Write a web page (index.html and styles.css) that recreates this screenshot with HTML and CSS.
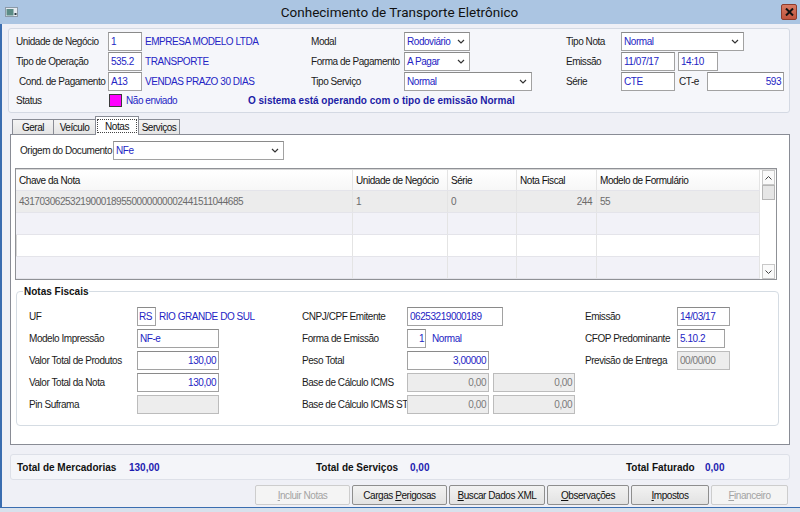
FILE: index.html
```html
<!DOCTYPE html>
<html lang="pt-BR">
<head>
  <meta charset="UTF-8">
  <title>Conhecimento de Transporte Eletrônico</title>
  <link rel="stylesheet" href="styles.css">
</head>
<body>
  <div class="window">
    <!-- Barra de título -->
    <div class="titlebar">
      <svg class="app-icon" width="13" height="10" viewBox="0 0 13 10">
        <rect x="0.5" y="0.5" width="12" height="9" fill="#e4eaf0" stroke="#8c9aa8"/>
        <rect x="1.5" y="2" width="7" height="6.5" fill="#5b8b86"/>
        <rect x="9.5" y="6" width="2" height="2" fill="#2d3b44"/>
      </svg>
      <span class="title">Conhecimento de Transporte Eletrônico</span>
      <span class="close-btn">
        <svg width="9" height="8" viewBox="0 0 9 8"><path d="M1 0.5l7 7M8 0.5l-7 7" stroke="#111" stroke-width="2"/></svg>
      </span>
    </div>

    <div class="client">
      <!-- Cabeçalho do conhecimento -->
      <div class="header-panel">
        <div class="hgrid">
          <span class="lbl">Unidade de Negócio</span>
          <div class="cell"><span class="field code">1</span><span class="desc">EMPRESA MODELO LTDA</span></div>
          <span class="lbl">Modal</span>
          <div class="cell"><div class="combo modal"><span>Rodoviário</span><svg class="chev" width="8" height="5" viewBox="0 0 8 5"><path d="M1 1l3 3 3-3" fill="none" stroke="#333" stroke-width="1.2"/></svg></div></div>
          <span class="lbl">Tipo Nota</span>
          <div class="cell"><div class="combo tipo-nota"><span>Normal</span><svg class="chev" width="8" height="5" viewBox="0 0 8 5"><path d="M1 1l3 3 3-3" fill="none" stroke="#333" stroke-width="1.2"/></svg></div></div>

          <span class="lbl">Tipo de Operação</span>
          <div class="cell"><span class="field code">535.2</span><span class="desc">TRANSPORTE</span></div>
          <span class="lbl">Forma de Pagamento</span>
          <div class="cell"><div class="combo modal"><span>A Pagar</span><svg class="chev" width="8" height="5" viewBox="0 0 8 5"><path d="M1 1l3 3 3-3" fill="none" stroke="#333" stroke-width="1.2"/></svg></div></div>
          <span class="lbl">Emissão</span>
          <div class="cell"><span class="field date">11/07/17</span><span class="field time">14:10</span></div>

          <span class="lbl indent">Cond. de Pagamento</span>
          <div class="cell"><span class="field code">A13</span><span class="desc">VENDAS PRAZO 30 DIAS</span></div>
          <span class="lbl">Tipo Serviço</span>
          <div class="cell"><div class="combo tipo-servico"><span>Normal</span><svg class="chev" width="8" height="5" viewBox="0 0 8 5"><path d="M1 1l3 3 3-3" fill="none" stroke="#333" stroke-width="1.2"/></svg></div></div>
          <span class="lbl">Série</span>
          <div class="cell"><span class="field date">CTE</span><span class="lbl cte-lbl">CT-e</span><span class="field cte num">593</span></div>
        </div>

        <div class="status-row">
          <span class="lbl">Status</span>
          <div class="cell"><span class="status-box"></span><span class="desc">Não enviado</span></div>
          <span class="notice">O sistema está operando com o tipo de emissão Normal</span>
        </div>
      </div>

      <!-- Abas -->
      <div class="tabs">
        <span class="tab t-geral">Geral</span>
        <span class="tab t-veiculo">Veículo</span>
        <span class="tab t-notas active"><span class="focus">Notas</span></span>
        <span class="tab t-servicos">Serviços</span>
      </div>

      <div class="tab-page">
        <div class="origem">
          <span class="lbl origem-lbl">Origem do Documento</span>
          <div class="combo origem-combo"><span>NFe</span><svg class="chev" width="8" height="5" viewBox="0 0 8 5"><path d="M1 1l3 3 3-3" fill="none" stroke="#333" stroke-width="1.2"/></svg></div>
        </div>

        <div class="grid-box">
          <div class="grid-rows">
            <div class="grow head">
              <span>Chave da Nota</span><span>Unidade de Negócio</span><span>Série</span><span>Nota Fiscal</span><span>Modelo de Formulário</span>
            </div>
            <div class="grow sel">
              <span>43170306253219000189550000000002441511044685</span><span>1</span><span>0</span><span class="num">244</span><span>55</span>
            </div>
            <div class="grow alt"><span></span><span></span><span></span><span></span><span></span></div>
            <div class="grow"><span></span><span></span><span></span><span></span><span></span></div>
            <div class="grow alt"><span></span><span></span><span></span><span></span><span></span></div>
          </div>
          <div class="vscroll">
            <span class="sb-btn"><svg width="7" height="4" viewBox="0 0 7 4"><path d="M0.5 3.5l3-3 3 3" fill="none" stroke="#444" stroke-width="1"/></svg></span>
            <span class="sb-thumb"></span>
            <span class="sb-track"></span>
            <span class="sb-btn"><svg width="7" height="4" viewBox="0 0 7 4"><path d="M0.5 0.5l3 3 3-3" fill="none" stroke="#444" stroke-width="1"/></svg></span>
          </div>
        </div>

        <fieldset class="group">
          <legend>Notas Fiscais</legend>
          <div class="fgrid">
            <span class="lbl">UF</span>
            <div class="cell"><span class="field uf">RS</span><span class="desc">RIO GRANDE DO SUL</span></div>
            <span class="lbl">CNPJ/CPF Emitente</span>
            <div class="cell"><span class="field cnpj">06253219000189</span></div>
            <span class="lbl">Emissão</span>
            <div class="cell"><span class="field nf-date">14/03/17</span></div>

            <span class="lbl">Modelo Impressão</span>
            <div class="cell"><span class="field mid">NF-e</span></div>
            <span class="lbl">Forma de Emissão</span>
            <div class="cell"><span class="field uf num">1</span><span class="desc forma">Normal</span></div>
            <span class="lbl">CFOP Predominante</span>
            <div class="cell"><span class="field cfop">5.10.2</span></div>

            <span class="lbl">Valor Total de Produtos</span>
            <div class="cell"><span class="field mid num">130,00</span></div>
            <span class="lbl">Peso Total</span>
            <div class="cell"><span class="field mid num">3,00000</span></div>
            <span class="lbl">Previsão de Entrega</span>
            <div class="cell"><span class="field nf-date off">00/00/00</span></div>

            <span class="lbl">Valor Total da Nota</span>
            <div class="cell"><span class="field mid num">130,00</span></div>
            <span class="lbl">Base de Cálculo ICMS</span>
            <div class="cell gap4"><span class="field mid num off">0,00</span><span class="field mid num off">0,00</span></div>
            <span></span><span></span>

            <span class="lbl">Pin Suframa</span>
            <div class="cell"><span class="field mid off"></span></div>
            <span class="lbl">Base de Cálculo ICMS ST</span>
            <div class="cell gap4"><span class="field mid num off">0,00</span><span class="field mid num off">0,00</span></div>
            <span></span><span></span>
          </div>
        </fieldset>
      </div>

      <!-- Totais -->
      <div class="totals">
        <span class="tot-lbl">Total de Mercadorias</span>
        <span class="tot-val">130,00</span>
        <span class="tot-lbl">Total de Serviços</span>
        <span class="tot-val">0,00</span>
        <span class="tot-lbl">Total Faturado</span>
        <span class="tot-val">0,00</span>
      </div>

      <!-- Botões -->
      <div class="buttons">
        <button class="btn b-incluir" disabled><u>I</u>ncluir Notas</button>
        <button class="btn b-cargas">Cargas <u>P</u>erigosas</button>
        <button class="btn b-buscar"><u>B</u>uscar Dados XML</button>
        <button class="btn b-obs"><u>O</u>bservações</button>
        <button class="btn b-impostos"><u>I</u>mpostos</button>
        <button class="btn b-fin" disabled><u>F</u>inanceiro</button>
      </div>
    </div>
  </div>
</body>
</html>
```

FILE: styles.css
```css
* {
  box-sizing: border-box;
}

body {
  margin: 0;
  background-color: #d8e1ec;
  font-family: "Liberation Sans", Arial, sans-serif;
  font-size: 10px;
  letter-spacing: -0.45px;
  color: #1b1b1b;
}

.window {
  width: 800px;
  height: 508px;
  display: flex;
  flex-direction: column;
  background-color: #eff0f6;
}

/* barra de título */
.titlebar {
  height: 24px;
  flex-shrink: 0;
  display: flex;
  align-items: center;
  padding: 0 3px 0 5px;
  background-color: #abc5e2;
}

.title {
  flex: 1;
  text-align: center;
  font-family: Roboto, "Liberation Sans", sans-serif;
  font-size: 13.5px;
  letter-spacing: 0;
  color: #111;
}

.close-btn {
  width: 16px;
  height: 16px;
  display: flex;
  align-items: center;
  justify-content: center;
  background: linear-gradient(#d77a63, #c0533c);
  border: 1px solid #8e3b2b;
  border-radius: 2px;
}

.client {
  flex: 1;
  border-left: 2px solid #3a6db0;
  border-bottom: 1px solid #3a6db0;
  padding: 4px 10px 0 6px;
}

/* campos */
.lbl {
  white-space: nowrap;
}

.lbl.indent {
  padding-left: 3px;
}

.cell {
  display: flex;
  align-items: center;
  gap: 3px;
  height: 100%;
}

.cell.gap4 {
  gap: 4px;
}

.field {
  display: flex;
  align-items: center;
  height: 19px;
  padding: 0 2px;
  background-color: #fff;
  border: 1px solid #a2a2a2;
  border-top-color: #8a8a8a;
  color: #2424c4;
  white-space: nowrap;
}

.field.num {
  justify-content: flex-end;
}

.field.off {
  background-color: #ededed;
  border-color: #bcbcbc;
  color: #7a7a7a;
}

.desc {
  color: #2424c4;
  white-space: nowrap;
}

.combo {
  display: flex;
  align-items: center;
  justify-content: space-between;
  height: 19px;
  padding: 0 4px 0 2px;
  background-color: #fff;
  border: 1px solid #a2a2a2;
  border-top-color: #8a8a8a;
  color: #2424c4;
}

.chev {
  flex-shrink: 0;
}

/* painel do cabeçalho */
.header-panel {
  height: 85px;
  padding: 3px 6px 0 7px;
  background-color: #f5f6fa;
  border: 1px solid #d4d9e3;
  border-radius: 3px;
}

.hgrid {
  display: grid;
  grid-template-columns: 92px 203px 93px 162px 55px 1fr;
  grid-auto-rows: 19px;
  row-gap: 1px;
  align-items: center;
}

.field.code { width: 34px; }
.combo.modal { width: 66px; }
.combo.tipo-servico { width: 128px; }
.combo.tipo-nota { width: 123px; }
.field.date { width: 54px; }
.field.time { width: 40px; }
.field.cte { width: 77px; }

.cte-lbl {
  width: 25px;
  margin-left: 1px;
}

.status-row {
  display: grid;
  grid-template-columns: 92px 140px 1fr;
  align-items: center;
  height: 17px;
  margin-top: 1px;
}

.status-box {
  width: 13px;
  height: 13px;
  margin-left: 1px;
  background-color: #ff00ff;
  border: 1px solid #3a3a3a;
}

.status-row .desc {
  margin-left: 1px;
}

.notice {
  font-weight: bold;
  letter-spacing: 0;
  color: #1c1ca6;
}

/* abas */
.tabs {
  display: flex;
  align-items: flex-end;
  height: 21px;
  padding-left: 4px;
}

.tab {
  display: flex;
  align-items: center;
  justify-content: center;
  height: 15px;
  margin-right: -1px;
  background: linear-gradient(#f4f4f4, #e4e4e4);
  border: 1px solid #898c95;
  border-bottom: none;
  color: #111;
}

.t-geral { width: 42px; }
.t-veiculo { width: 43px; }
.t-notas { width: 44px; }
.t-servicos { width: 42px; }

.tab.active {
  position: relative;
  z-index: 1;
  height: 19px;
  margin-bottom: -1px;
  padding: 2px 1px 2px;
  background: #fff;
  align-items: stretch;
}

.tab .focus {
  flex: 1;
  display: flex;
  justify-content: center;
  padding-top: 1px;
  border: 1px dotted #444;
}

.tab-page {
  height: 311px;
  margin-left: 2px;
  background-color: #fff;
  border: 1px solid #898c95;
}

.origem {
  display: flex;
  align-items: center;
  margin: 6px 0 0 9px;
}

.origem-lbl {
  width: 93px;
}

.combo.origem-combo {
  width: 171px;
}

/* grade de notas */
.grid-box {
  display: flex;
  width: 762px;
  margin: 8px 0 0 4px;
  padding-top: 1px;
  border: 1px solid #8f9196;
  box-shadow: inset 1px 1px 0 #d6d6d6;
}

.grid-rows {
  width: 744px;
}

.grow {
  display: grid;
  grid-template-columns: 337px 95px 69px 80px 163px;
  height: 22px;
  border-bottom: 1px solid #e4e4ea;
}

.grow span {
  display: flex;
  align-items: center;
  padding-left: 3px;
  border-right: 1px solid #e4e4e4;
  white-space: nowrap;
  overflow: hidden;
}

.grow span.num {
  justify-content: flex-end;
  padding-right: 4px;
}

.grow.head {
  height: 21px;
  background: linear-gradient(#ffffff, #f7f7f7);
  color: #111;
}

.grow.sel {
  background-color: #ececec;
  color: #6b6b6b;
}

.grow.alt {
  background-color: #f2f2f8;
}

.vscroll {
  width: 16px;
  display: flex;
  flex-direction: column;
  padding: 0 1px 0 2px;
  background-color: #fff;
}

.sb-btn {
  height: 15px;
  display: flex;
  align-items: center;
  justify-content: center;
  border: 1px solid #c8c8c8;
  background-color: #fafafa;
}

.sb-thumb {
  height: 15px;
  border: 1px solid #b6b6b6;
  background-color: #e6e6e6;
}

.sb-track {
  flex: 1;
}

/* grupo notas fiscais */
.group {
  width: 763px;
  margin: 6px 0 0 5px;
  padding: 10px 0 0 12px;
  border: 1px solid #d5dce3;
  border-radius: 4px;
}

.group legend {
  margin-left: -6px;
  padding: 0 1px;
  font-weight: bold;
  letter-spacing: 0;
  color: #111;
}

.fgrid {
  display: grid;
  grid-template-columns: 108px 165px 105px 178px 92px 1fr;
  grid-auto-rows: 19px;
  row-gap: 3px;
  align-items: center;
  height: 118px;
}

.field.uf { width: 19px; padding: 0 1px; }
.field.mid { width: 82px; }
.field.cnpj { width: 96px; }
.field.nf-date { width: 53px; }
.field.cfop { width: 48px; }

.desc.forma {
  margin-left: 3px;
}

/* totais */
.totals {
  display: grid;
  grid-template-columns: 112px 187px 94px 216px 79px 1fr;
  align-items: center;
  height: 26px;
  margin: 9px 0 0 2px;
  padding-left: 6px;
  background-color: #f4f5f9;
  border: 1px solid #dde0e8;
  border-radius: 3px;
  font-weight: bold;
  letter-spacing: 0;
}

.tot-lbl {
  color: #111;
}

.tot-val {
  color: #1c1cb0;
}

/* botões */
.buttons {
  display: flex;
  justify-content: flex-end;
  gap: 2px;
  margin-top: 5px;
  padding-right: 2px;
}

.btn {
  height: 20px;
  padding: 0;
  font-family: "Liberation Sans", Arial, sans-serif;
  font-size: 10px;
  letter-spacing: -0.45px;
  color: #111;
  background: linear-gradient(#f2f2f2, #e2e2e2);
  border: 1px solid #8e8e8e;
  border-radius: 2px;
}

.btn:disabled {
  color: #a3a3a3;
  background: #f4f4f4;
  border-color: #cdcdcd;
}

.b-incluir { width: 95px; }
.b-cargas { width: 95px; }
.b-buscar { width: 96px; }
.b-obs { width: 82px; }
.b-impostos { width: 78px; }
.b-fin { width: 77px; }
```
